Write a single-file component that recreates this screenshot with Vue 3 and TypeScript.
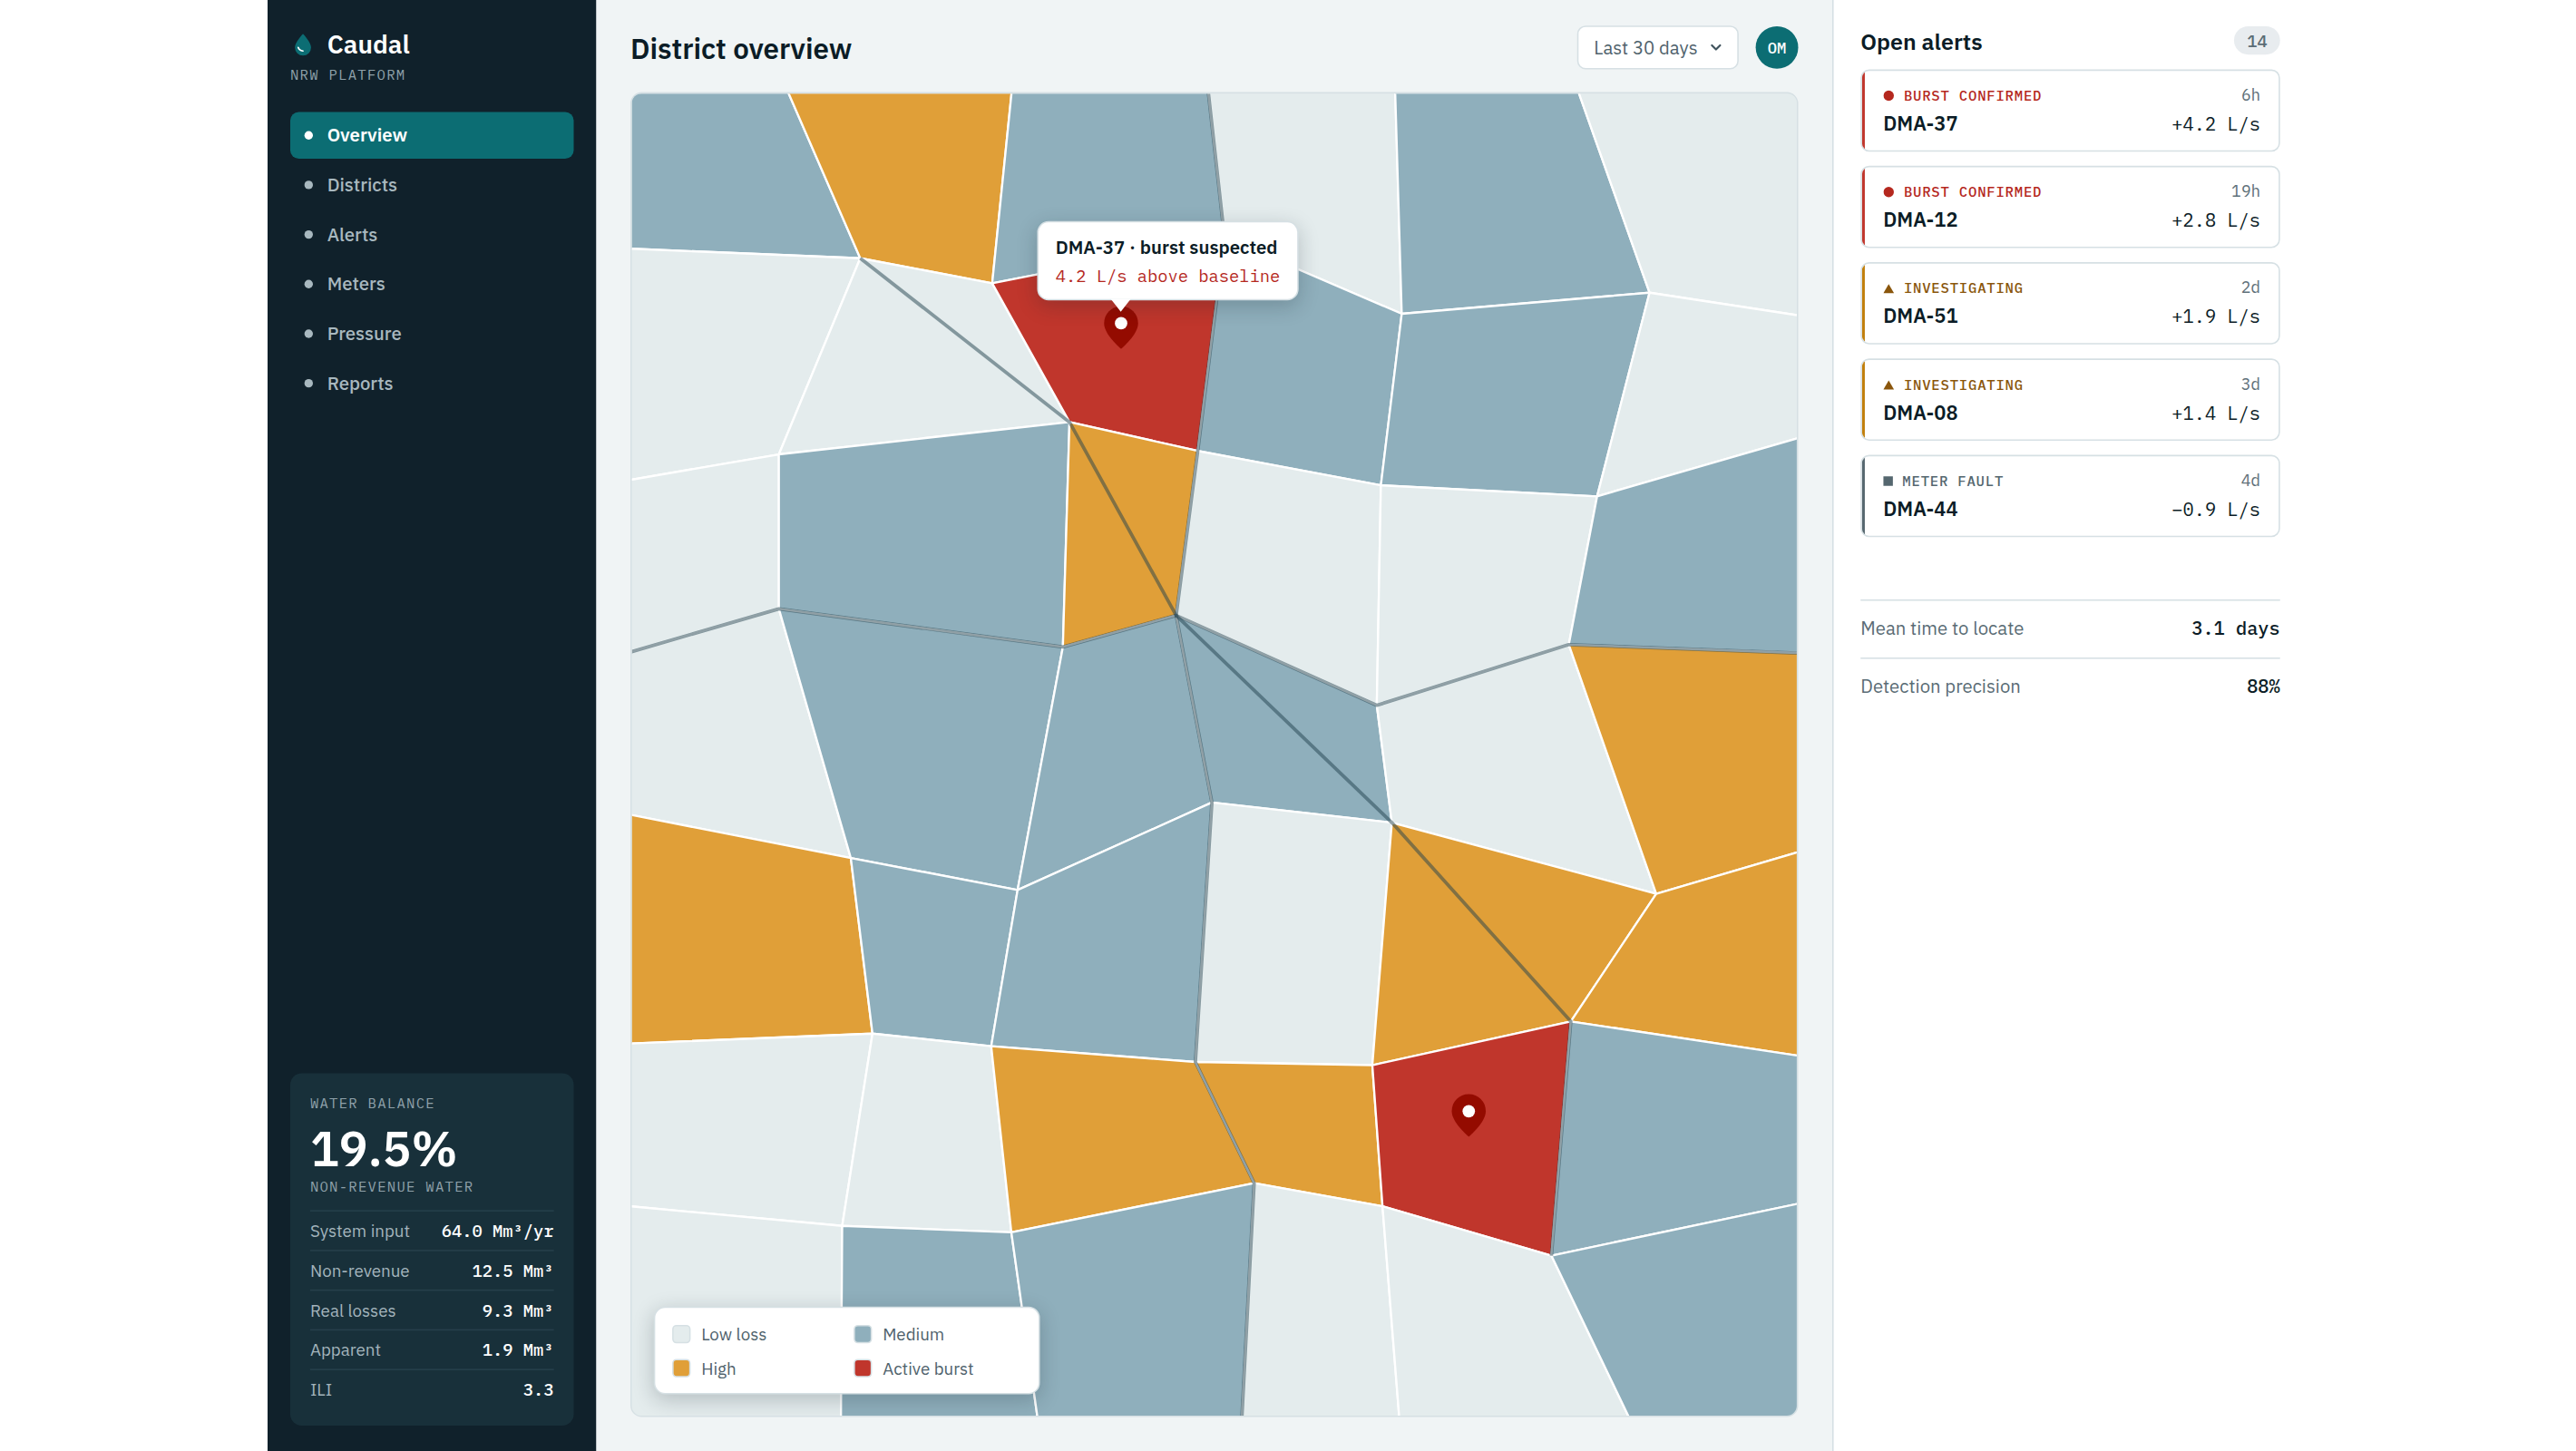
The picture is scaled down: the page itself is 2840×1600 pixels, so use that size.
<script setup lang="ts">
type Loss = 'low' | 'medium' | 'high' | 'active'
type Point = [number, number]

const nav = ['Overview', 'Districts', 'Alerts', 'Meters', 'Pressure', 'Reports']
const active = 'Overview'

const balance = [
  { label: 'System input', value: '64.0 Mm³/yr' },
  { label: 'Non-revenue', value: '12.5 Mm³' },
  { label: 'Real losses', value: '9.3 Mm³' },
  { label: 'Apparent', value: '1.9 Mm³' },
  { label: 'ILI', value: '3.3' },
]

const alerts = [
  { id: 'DMA-37', kind: 'burst', status: 'BURST CONFIRMED', age: '6h', flow: '+4.2 L/s' },
  { id: 'DMA-12', kind: 'burst', status: 'BURST CONFIRMED', age: '19h', flow: '+2.8 L/s' },
  { id: 'DMA-51', kind: 'check', status: 'INVESTIGATING', age: '2d', flow: '+1.9 L/s' },
  { id: 'DMA-08', kind: 'check', status: 'INVESTIGATING', age: '3d', flow: '+1.4 L/s' },
  { id: 'DMA-44', kind: 'fault', status: 'METER FAULT', age: '4d', flow: '−0.9 L/s' },
]

const stats = [
  { label: 'Mean time to locate', value: '3.1 days' },
  { label: 'Detection precision', value: '88%' },
]

const legend: { loss: Loss; label: string }[] = [
  { loss: 'low', label: 'Low loss' },
  { loss: 'medium', label: 'Medium' },
  { loss: 'high', label: 'High' },
  { loss: 'active', label: 'Active burst' },
]

// Network nodes, row by row; districts are the quads between neighbouring nodes.
const nodes: Point[][] = [
  [[690, 95], [866, 95], [1116, 95], [1331.4, 95], [1538, 95], [1738, 95], [1990, 95]],
  [[690, 274], [948.4, 284.7], [1093.9, 312.3], [1350, 262], [1545.4, 346], [1818.6, 322.7], [1990, 348.8]],
  [[690, 530], [858.7, 501], [1179.1, 465.4], [1320.5, 497.2], [1522.4, 535.1], [1760.8, 547.3], [1990, 480.8]],
  [[690, 720.4], [858.7, 671.3], [1171.8, 713.4], [1296.7, 678.6], [1517.9, 777.7], [1729.6, 710.8], [1990, 720.3]],
  [[690, 897.4], [938, 946.1], [1121.9, 981.3], [1336.1, 884.9], [1534.5, 907], [1826, 985.5], [1990, 937.4]],
  [[690, 1150.9], [961.9, 1139.7], [1092.8, 1153.6], [1317.9, 1171], [1513, 1174.5], [1731.8, 1126.3], [1990, 1165.2]],
  [[690, 1329.7], [928.5, 1351.7], [1115, 1358.8], [1382.7, 1304.6], [1524.2, 1330], [1710.4, 1384.5], [1990, 1325.7]],
  [[690, 1570], [927.1, 1570], [1144.8, 1570], [1368.8, 1570], [1543.2, 1570], [1799.4, 1570], [1990, 1570]],
]

const grades = ['mhmlml', 'llamml', 'lmhllm', 'lmmmlh', 'hmmlhh', 'llhham', 'lmmllm']
const gradeName: Record<string, Loss> = { l: 'low', m: 'medium', h: 'high', a: 'active' }

const path = (pts: Point[]) => pts.map((p) => p.join(',')).join(' ')

const districts = grades.flatMap((row, r) =>
  [...row].map((g, c) => ({
    key: `${r}-${c}`,
    loss: gradeName[g],
    points: path([nodes[r][c], nodes[r][c + 1], nodes[r + 1][c + 1], nodes[r + 1][c]]),
  })),
)

// Trunk mains running over the district boundaries.
const mains = [
  path(nodes[3]),
  path(nodes.map((row) => row[3])),
  path([nodes[1][1], nodes[2][2], nodes[3][3], nodes[4][4], nodes[5][5], nodes[6][5]]),
]

const pins: Point[] = [[1236, 356.4], [1619.3, 1225.3]]
</script>

<template>
  <div class="stage">
    <div class="app">
      <aside class="sidebar">
        <div class="brand">
          <svg class="drop" viewBox="0 0 18 18" width="18" height="18">
            <path d="M9 1.3 C9 1.3 3.3 7.3 3.3 11 a5.7 5.7 0 0 0 11.4 0 C14.7 7.3 9 1.3 9 1.3 Z" fill="#0c6d73" />
            <path d="M5.6 11 C6 12.4 7.2 13.3 9 13.5" fill="none" stroke="#fff" stroke-width="1.1" stroke-linecap="round" />
          </svg>
          <span class="name">Caudal</span>
        </div>
        <div class="eyebrow platform">NRW PLATFORM</div>
        <nav class="nav">
          <a v-for="item in nav" :key="item" class="item" :class="{ on: item === active }">
            <i class="dot"></i><span class="text">{{ item }}</span>
          </a>
        </nav>
        <section class="balance">
          <div class="eyebrow">WATER BALANCE</div>
          <div class="figure">19.5%</div>
          <div class="eyebrow sub">NON-REVENUE WATER</div>
          <div class="rows">
            <div v-for="b in balance" :key="b.label" class="row">
              <span>{{ b.label }}</span><b>{{ b.value }}</b>
            </div>
          </div>
        </section>
      </aside>

      <main class="main">
        <header class="top">
          <h1>District overview</h1>
          <div class="tools">
            <button class="select">
              Last 30 days
              <svg viewBox="0 0 10 10" width="10" height="10">
                <path d="M2.1 3.5 L5 6.4 L7.9 3.5" fill="none" stroke="#40535d" stroke-width="1.4" stroke-linecap="round" stroke-linejoin="round" />
              </svg>
            </button>
            <span class="avatar">OM</span>
          </div>
        </header>
        <section class="map">
          <svg class="canvas" viewBox="696.56 103.1 1284.4 1457.8" preserveAspectRatio="none">
            <polygon v-for="d in districts" :key="d.key" :points="d.points" :class="['district', d.loss]" />
            <polyline v-for="m in mains" :key="m" :points="m" class="pipe" />
            <g v-for="p in pins" :key="p[0]" :transform="`translate(${p[0]} ${p[1]}) scale(1.5625)`">
              <path d="M0 -12 C-6.8 -12 -12 -6.8 -12 0 C-12 8.2 0 18 0 18 C0 18 12 8.2 12 0 C12 -6.8 6.8 -12 0 -12 Z" fill="#940b00" />
              <circle r="4.4" fill="#fff" />
            </g>
          </svg>
          <div class="tooltip">
            <strong>DMA-37 · burst suspected</strong>
            <span>4.2 L/s above baseline</span>
          </div>
          <div class="legend">
            <span v-for="l in legend" :key="l.label" class="entry">
              <i class="swatch" :class="l.loss"></i>{{ l.label }}
            </span>
          </div>
        </section>
      </main>

      <aside class="alerts">
        <header class="head">
          <h2>Open alerts</h2>
          <span class="count">14</span>
        </header>
        <div class="list">
          <article v-for="a in alerts" :key="a.id" class="alert" :class="a.kind">
            <div class="line first">
              <span class="status">
                <svg v-if="a.kind === 'burst'" class="mark" viewBox="0 0 8 8" width="8" height="8"><circle cx="3.85" cy="4" r="3.65" fill="currentColor" /></svg>
                <svg v-else-if="a.kind === 'check'" class="mark" viewBox="0 0 8 8" width="8" height="8"><path d="M3.85 1 L7.6 7.4 H0.1 Z" fill="currentColor" /></svg>
                <svg v-else class="mark" viewBox="0 0 7 8" width="7" height="8"><path d="M0 .7 H6.8 V7.4 H0 Z" fill="currentColor" /></svg>
                {{ a.status }}
              </span>
              <time>{{ a.age }}</time>
            </div>
            <div class="line second">
              <strong>{{ a.id }}</strong>
              <span class="flow">{{ a.flow }}</span>
            </div>
          </article>
        </div>
        <dl class="stats">
          <div v-for="s in stats" :key="s.label" class="stat">
            <dt>{{ s.label }}</dt>
            <dd>{{ s.value }}</dd>
          </div>
        </dl>
      </aside>
    </div>
  </div>
</template>

<style>
body {
  margin: 0;
  background: #fff;
  overflow: hidden;
}
</style>

<style scoped>
.stage {
  width: 2840px;
  height: 1600px;
  padding-left: 295px;
  box-sizing: border-box;
  overflow: hidden;
  background: #fff;
}

/* The 1440×1024 layout is rasterised at 2x and fitted to the stage height. */
.app {
  display: flex;
  width: 1440px;
  height: 1024px;
  zoom: 2;
  transform: scale(0.78125);
  transform-origin: 0 0;
  font-family: "IBM Plex Sans", Roboto, "Noto Sans", sans-serif;
  font-size: 13px;
  color: #0b1c26;
}

.app * {
  box-sizing: border-box;
}

h1, h2, dl, dd, dt {
  margin: 0;
}

.sidebar {
  display: flex;
  flex-direction: column;
  flex: none;
  width: 232px;
  padding: 19.5px 16px 18px;
  background: #10212b;
}

.brand {
  display: flex;
  align-items: center;
  gap: 8px;
}

.drop {
  display: block;
}

.name {
  font-size: 18px;
  font-weight: 600;
  color: #fff;
}

.eyebrow {
  font-family: "IBM Plex Mono", "Liberation Mono", monospace;
  font-size: 10px;
  letter-spacing: 0.08em;
  color: #8fa1aa;
}

.platform {
  margin-top: 2.5px;
}

.nav {
  display: flex;
  flex-direction: column;
  gap: 2px;
  margin-top: 20px;
}

.item {
  display: flex;
  align-items: center;
  gap: 10px;
  padding: 8px 10px;
  border-radius: 6px;
  font-weight: 500;
  color: #a8b8bf;
}

.text {
  margin: -0.5px 0 0.5px;
}

.item.on {
  background: #0c6d73;
  font-weight: 600;
  color: #fff;
}

.dot {
  width: 6px;
  height: 6px;
  border-radius: 50%;
  background: currentColor;
}

.balance {
  margin-top: auto;
  padding: 14px 14px 12px;
  border-radius: 8px;
  background: #18303a;
}

.figure {
  margin-top: 7px;
  font-size: 34px;
  font-weight: 600;
  line-height: 1.1;
  color: #fff;
}

.sub {
  margin-top: 1px;
}

.rows {
  margin-top: 10px;
}

.row {
  display: flex;
  justify-content: space-between;
  align-items: baseline;
  padding: 5.5px 0;
  border-top: 1px solid #263f4b;
  font-size: 12px;
  color: #a3b4bc;
}

.row b {
  font-family: "IBM Plex Mono", "Liberation Mono", monospace;
  font-weight: 500;
  color: #fff;
}

.main {
  display: flex;
  flex-direction: column;
  flex: 1;
  gap: 16px;
  min-width: 0;
  padding: 18px 24px 24px;
  background: #f0f4f5;
}

.top {
  display: flex;
  align-items: center;
  justify-content: space-between;
}

h1 {
  margin-top: 1px;
  font-size: 20px;
  font-weight: 600;
}

.tools {
  display: flex;
  align-items: center;
  gap: 12px;
}

.select {
  display: flex;
  align-items: center;
  gap: 8px;
  padding: 6px 10px 6px 11px;
  border: 1px solid #d6e0e4;
  border-radius: 6px;
  background: #fff;
  font: 400 13px "IBM Plex Sans", Roboto, "Noto Sans", sans-serif;
  color: #4f626c;
}

.avatar {
  display: flex;
  align-items: center;
  justify-content: center;
  width: 30px;
  height: 30px;
  border-radius: 50%;
  background: #0c6d73;
  font: 500 11px "IBM Plex Mono", "Liberation Mono", monospace;
  color: #fff;
}

.map {
  position: relative;
  flex: 1;
  min-height: 0;
  border: 1px solid #d6e0e4;
  border-radius: 8px;
  background: #e4eced;
  overflow: hidden;
}

.canvas {
  display: block;
  width: 822px;
  height: 933px;
}

.district {
  stroke: #fff;
  stroke-width: 2.34;
  stroke-linejoin: round;
}

.district.low { fill: #e4eced; }
.district.medium { fill: #8fafbc; }
.district.high { fill: #e09f38; }
.district.active { fill: #c0362c; }

.pipe {
  fill: none;
  stroke: #22424e;
  stroke-opacity: 0.5;
  stroke-width: 3.75;
  stroke-linejoin: round;
}

.tooltip {
  position: absolute;
  left: 286px;
  top: 90px;
  display: flex;
  flex-direction: column;
  gap: 4px;
  padding: 8.5px 12px;
  border: 1px solid #d6e0e4;
  border-radius: 8px;
  background: #fff;
  box-shadow: 0 4px 14px rgba(16, 33, 43, 0.22);
  white-space: nowrap;
}

.tooltip::after {
  content: "";
  position: absolute;
  left: 51px;
  top: 100%;
  border: 7px solid transparent;
  border-top: 9px solid #fff;
  border-bottom: 0;
}

.tooltip strong {
  font-weight: 600;
}

.tooltip span {
  font: 400 12px "IBM Plex Mono", "Liberation Mono", monospace;
  color: #b5281e;
}

.legend {
  position: absolute;
  left: 15.5px;
  bottom: 15px;
  display: grid;
  grid-template-columns: 118px 118px;
  gap: 8px 10px;
  padding: 10.5px 12.5px 9.5px 12px;
  border: 1px solid #d6e0e4;
  border-radius: 8px;
  background: #fff;
  box-shadow: 0 4px 14px rgba(16, 33, 43, 0.22);
  font-size: 12px;
  color: #4f626c;
}

.entry {
  display: flex;
  align-items: center;
  gap: 7.5px;
}

.swatch {
  width: 13px;
  height: 13px;
  border: 1px solid #d6e0e4;
  border-radius: 3px;
}

.swatch.low { background: #e4eced; }
.swatch.medium { background: #8fafbc; }
.swatch.high { background: #e09f38; }
.swatch.active { background: #c0362c; }

.alerts {
  flex: none;
  width: 336px;
  padding: 18px 20px 18px 19px;
  border-left: 1px solid #d6e0e4;
  background: #fff;
}

.head {
  display: flex;
  align-items: center;
  justify-content: space-between;
  height: 21px;
}

h2 {
  margin-top: 1px;
  font-size: 16px;
  font-weight: 600;
}

.count {
  padding: 2px 9px;
  border-radius: 10px;
  background: #e8ecef;
  font: 500 12px "IBM Plex Mono", "Liberation Mono", monospace;
  color: #5a6c75;
}

.list {
  display: flex;
  flex-direction: column;
  gap: 10px;
  margin-top: 10px;
}

.alert {
  position: relative;
  height: 58px;
  padding: 9px 13px 0 15px;
  border: 1px solid #d6e0e4;
  border-radius: 6px;
  overflow: hidden;
}

.alert::before {
  content: "";
  position: absolute;
  left: 0;
  top: 0;
  bottom: 0;
  width: 2px;
  background: var(--bar);
}

.burst { --bar: #c0362c; --label: #b5281e; }
.check { --bar: #c17f0c; --label: #8a560c; }
.fault { --bar: #55676f; --label: #55676f; }

.line {
  display: flex;
  align-items: baseline;
  justify-content: space-between;
}

.first {
  height: 15px;
}

.second {
  margin-top: 3.5px;
}

.status {
  font: 500 10px "IBM Plex Mono", "Liberation Mono", monospace;
  letter-spacing: 0.05em;
  color: var(--label);
}

.mark {
  vertical-align: -0.5px;
}

time {
  font-size: 11.5px;
  color: #5f717a;
}

.second strong {
  font-size: 14px;
  font-weight: 600;
}

.flow {
  font: 400 13px "IBM Plex Mono", "Liberation Mono", monospace;
}

.stats {
  margin-top: 44px;
}

.stat {
  display: flex;
  align-items: baseline;
  justify-content: space-between;
  height: 41px;
  padding-top: 10.5px;
  border-top: 1px solid #d6e0e4;
}

dt {
  color: #5a6c75;
}

dd {
  font-family: "IBM Plex Mono", "Liberation Mono", monospace;
  font-weight: 500;
}
</style>
